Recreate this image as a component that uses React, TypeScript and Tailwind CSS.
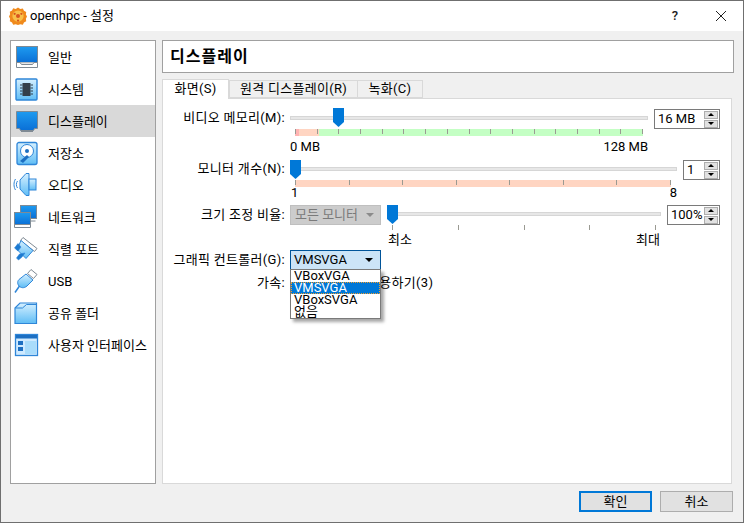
import React from "react";

const FONT = { fontFamily: 'Roboto, "Noto Sans CJK KR", sans-serif' };

function Defs() {
  return (
    <svg width="0" height="0" className="absolute">
      <defs>
        <linearGradient id="scr" x1="0" y1="0" x2="0" y2="1">
          <stop offset="0" stopColor="#1e9bf0" />
          <stop offset="1" stopColor="#0a6fd6" />
        </linearGradient>
        <linearGradient id="lite" x1="0" y1="0" x2="0" y2="1">
          <stop offset="0" stopColor="#d6f0ff" />
          <stop offset="1" stopColor="#5fbdf5" />
        </linearGradient>
      </defs>
    </svg>
  );
}

function Icon({ name }: { name: string }) {
  const common = { width: 26, height: 26, viewBox: "0 0 26 26", className: "shrink-0" };
  switch (name) {
    case "general":
      return (
        <svg {...common}>
          <rect x="3.500" y="2.500" width="21" height="16" fill="url(#scr)" stroke="#7f8a94" />
          <path d="M3.500 18.500h21v5h-21z" fill="#fff" stroke="#7f8a94" />
          <path d="M7 18.500l1.500 2h11l1.500-2" fill="#e6e6e6" stroke="#7f8a94" />
        </svg>
      );
    case "system":
      return (
        <svg {...common}>
          <rect x="3" y="3" width="21" height="21" rx="1" fill="url(#lite)" stroke="#2f86d8" strokeWidth="1.400" />
          <rect x="9.500" y="7" width="8" height="13" fill="#333f4a" />
          <path d="M7 9h2.500M7 12h2.500M7 15h2.500M7 18h2.500M17.500 9h2.500M17.500 12h2.500M17.500 15h2.500M17.500 18h2.500" stroke="#333f4a" />
        </svg>
      );
    case "display":
      return (
        <svg {...common}>
          <path d="M3.500 3.500h21v17h-3l-1 2h-13l-1-2h-3z" fill="url(#scr)" stroke="#7f8a94" />
          <path d="M8 23.500h12" stroke="#7f8a94" />
        </svg>
      );
    case "storage":
      return (
        <svg {...common}>
          <rect x="4" y="2.500" width="20" height="22" rx="2" fill="url(#lite)" stroke="#2f86d8" strokeWidth="1.300" />
          <circle cx="14" cy="11" r="6.500" fill="#fff" stroke="#2f86d8" />
          <circle cx="14" cy="11" r="2" fill="#1d6fc2" />
          <path d="M7 21l7-6 2 2-6 6z" fill="#1d6fc2" />
        </svg>
      );
    case "audio":
      return (
        <svg {...common}>
          <path d="M7 8L13 1.500h3v22h-3L7 17z" fill="url(#lite)" stroke="#2f86d8" />
          <rect x="16" y="7" width="7" height="11" fill="url(#lite)" stroke="#2f86d8" />
          <path d="M4.500 9c-1.500 2-1.500 5 0 7M2.500 7c-2 3-2 8 0 11" stroke="#2f86d8" fill="none" />
        </svg>
      );
    case "network":
      return (
        <svg {...common}>
          <rect x="7.500" y="1.500" width="16" height="13" fill="url(#scr)" stroke="#7f8a94" />
          <rect x="1.500" y="8.500" width="16" height="12" fill="url(#scr)" stroke="#7f8a94" />
          <path d="M1.500 20.500h16v3h-16z" fill="#fff" stroke="#7f8a94" />
          <path d="M17.500 17h5" stroke="#7f8a94" />
        </svg>
      );
    case "serial":
      return (
        <svg {...common}>
          <path d="M10 1.500l14 11-2.500 3-14-11z" fill="#fff" stroke="#7f8a94" />
          <path d="M8 4.500l12 10-7 8-9-9z" fill="url(#lite)" stroke="#2f86d8" />
          <path d="M5 7.500L1.500 12l3.500 3 3-4zM12 17l-3 4-3.500 3-2-2 3-4z" fill="#1d7ad0" stroke="#2f86d8" strokeWidth=".6" />
        </svg>
      );
    case "usb":
      return (
        <svg {...common}>
          <path d="M18 1.500l6 5-3.500 4-6-5z" fill="#fff" stroke="#7f8a94" />
          <path d="M13 6l7 6-6 6c-3 2.500-6 2-8 0-2-2.500-1.500-5 0-6.500z" fill="url(#lite)" stroke="#2f86d8" />
          <path d="M6.500 18L2 24.500" stroke="#2f86d8" strokeWidth="1.500" />
        </svg>
      );
    case "folder":
      return (
        <svg {...common}>
          <path d="M2 8l5-5h16.500v20.500H2z" fill="url(#lite)" stroke="#2f86d8" strokeWidth="1.200" />
          <path d="M2.500 8h7l4-3.500h9.500" fill="none" stroke="#2f86d8" />
        </svg>
      );
    default:
      return (
        <svg {...common}>
          <rect x="2.500" y="2.500" width="22" height="21" fill="#cfeaff" stroke="#2f86d8" strokeWidth="1.300" />
          <rect x="3" y="3" width="21" height="3.500" fill="#1d6fc2" />
          <rect x="5" y="9" width="5" height="4" fill="#1d6fc2" />
          <rect x="5" y="15" width="5" height="4" fill="#1d6fc2" />
          <rect x="12" y="9" width="11" height="13" fill="#a9dcfb" />
        </svg>
      );
  }
}

const MENU = [
  ["general", "일반"],
  ["system", "시스템"],
  ["display", "디스플레이"],
  ["storage", "저장소"],
  ["audio", "오디오"],
  ["network", "네트워크"],
  ["serial", "직렬 포트"],
  ["usb", "USB"],
  ["folder", "공유 폴더"],
  ["ui", "사용자 인터페이스"],
];

function Thumb({ left }: { left: number }) {
  return (
    <svg width="11" height="19" viewBox="0 0 11 19" className="absolute top-0" style={{ left }}>
      <path d="M0 0h11v14l-5.500 5L0 14z" fill="#0078d7" />
    </svg>
  );
}

function Track({ width, thumb, height = 19, trackTop = 7 }: { width: number; thumb: number; height?: number; trackTop?: number }) {
  return (
    <div className="relative" style={{ width, height }}>
      <div className="absolute left-0 right-0 h-[4px] bg-[#e7e7e7] border border-[#d6d6d6]" style={{ top: trackTop }} />
      <Thumb left={thumb} />
    </div>
  );
}

function Ticks({ count }: { count: number }) {
  return (
    <div className="absolute inset-0 flex justify-between">
      {Array.from({ length: count }).map((_, i) => (
        <div key={i} className="w-px h-[5px] bg-[#9a9a92]" />
      ))}
    </div>
  );
}

function Spin({ value, width }: { value: string; width: number }) {
  return (
    <div className="h-[20px] border border-[#7a7a7a] bg-white flex items-center pl-[3px] pr-px" style={{ width }}>
      <span className="flex-1 text-[13px] leading-[18px] text-black">{value}</span>
      <div className="flex flex-col gap-px w-[14px]">
        <div className="h-[8px] bg-[#e1e1e1] border border-[#adadad] flex items-center justify-center">
          <div className="w-0 h-0 border-x-[3px] border-x-transparent border-b-[3px] border-b-black" />
        </div>
        <div className="h-[8px] bg-[#e1e1e1] border border-[#adadad] flex items-center justify-center">
          <div className="w-0 h-0 border-x-[3px] border-x-transparent border-t-[3px] border-t-black" />
        </div>
      </div>
    </div>
  );
}

function Label({ children, lh = "leading-[20px]" }: { children: React.ReactNode; lh?: string }) {
  return <div className={`w-[123px] shrink-0 pr-[2px] text-right text-[13px] tracking-[0.3px] text-black whitespace-nowrap ${lh}`}>{children}</div>;
}

export default function App() {
  return (
    <div style={FONT} className="relative w-[744px] h-[523px] bg-[#f0f0f0] border-x border-b border-[#6f6f6f] flex flex-col overflow-hidden text-black">
      <Defs />
      <div className="h-[31px] bg-white border-t border-[#6f6f6f] flex items-center shrink-0 pl-[8px]">
        <svg width="18" height="18" viewBox="0 0 16 16" className="mr-[3px]">
          <path d="M8 .5l2 1.200 2.300-.3 1 2 2 1-.3 2.300L16 8.500l-1 2 .3 2.200-2 1-1 2-2.300-.3L8 16l-2-.600-2.300.3-1-2-2-1 .3-2.200L0 8.500l1-2-.3-2.300 2-1 1-2L6 1.700z" fill="#f08a1c" />
          <circle cx="8" cy="8" r="5" fill="#f8c04a" />
          <circle cx="8" cy="8" r="1.800" fill="#d9541e" />
          <circle cx="5" cy="6" r="1" fill="#d9541e" />
          <circle cx="11" cy="6" r="1" fill="#d9541e" />
          <circle cx="8" cy="12" r="1" fill="#d9541e" />
        </svg>
        <span className="text-[13px] leading-[20px] whitespace-nowrap">openhpc - 설정</span>
        <div className="flex-1" />
        <span className="text-[13px] font-medium mr-[37px] text-[#222]">?</span>
        <svg width="12" height="12" viewBox="0 0 12 12" className="mr-[16px]">
          <path d="M1 1l10 10M11 1L1 11" stroke="#222" strokeWidth="1" />
        </svg>
      </div>

      <div className="flex-1 flex gap-[6px] pl-[9px] pr-[9px] pt-[9px] min-h-0">
        <div className="w-[146px] h-[444px] bg-white border border-[#a0a0a0] shrink-0">
          {MENU.map(([k, t]) => (
            <div key={k} className={`h-[32px] flex items-center pl-[2px] ${k === "display" ? "bg-[#d9d9d9]" : ""}`}>
              <Icon name={k} />
              <span className="ml-[9px] mt-px text-[13px] leading-[20px] whitespace-nowrap">{t}</span>
            </div>
          ))}
        </div>

        <div className="flex-1 flex flex-col min-w-0">
          <div className="h-[33px] bg-white border border-[#a0a0a0] flex items-center pl-[7px] shrink-0">
            <span className="text-[16px] font-bold tracking-[1px] leading-[20px]">디스플레이</span>
          </div>

          <div className="flex items-end h-[26px] shrink-0 relative z-10 mr-[3px]">
            <div className="w-[67px] h-[20px] bg-white border border-b-0 border-[#d9d9d9] text-center text-[13px] tracking-[0.3px] leading-[18px]">화면(S)</div>
            <div className="w-[129px] h-[18px] mb-px bg-[#f0f0f0] border border-[#d9d9d9] text-center text-[13px] tracking-[0.3px] leading-[16px] whitespace-nowrap">원격 디스플레이(R)</div>
            <div className="w-[66px] h-[18px] mb-px -ml-px bg-[#f0f0f0] border border-[#d9d9d9] text-center text-[13px] tracking-[0.3px] leading-[16px]">녹화(C)</div>
          </div>

          <div className="h-[386px] -mt-px bg-white border border-[#d9d9d9] mr-[2px] pl-px pt-[9px] relative">
            {/* Video memory */}
            <div className="flex items-start">
              <Label>비디오 메모리(M):</Label>
              <div className="w-[358px] ml-[3px] shrink-0">
                <Track width={358} thumb={43} height={21} trackTop={8} />
                <div className="relative ml-[5px] w-[348px] h-[7px] flex">
                  <div className="w-[4px] bg-[#ffb3b3]" />
                  <div className="w-[20px] bg-[#ffd5c2]" />
                  <div className="flex-1 bg-[#c4ffc4]" />
                  <Ticks count={17} />
                </div>
                <div className="flex justify-between text-[13px] leading-[18px] mt-[2px]">
                  <span>0 MB</span>
                  <span>128 MB</span>
                </div>
              </div>
              <div className="ml-[6px] mt-px"><Spin value="16 MB" width={66} /></div>
            </div>

            {/* Monitor count */}
            <div className="flex items-start mt-[4px]">
              <Label lh="leading-[18px]">모니터 개수(N):</Label>
              <div className="w-[387px] ml-[3px] shrink-0">
                <Track width={387} thumb={0} height={20} />
                <div className="relative ml-[5px] w-[376px] h-[7px] bg-[#ffd5c2]">
                  <Ticks count={8} />
                </div>
                <div className="flex justify-between text-[13px] leading-[12px] pl-px">
                  <span>1</span>
                  <span>8</span>
                </div>
              </div>
              <div className="ml-[6px]"><Spin value="1" width={37} /></div>
            </div>

            {/* Scale */}
            <div className="flex items-start mt-[6px]">
              <Label>크기 조정 비율:</Label>
              <div className="ml-[3px] w-[91px] h-[20px] bg-[#cccccc] border border-[#bfbfbf] flex items-center pl-[4px] pr-[6px] shrink-0">
                <span className="flex-1 text-[13px] leading-[18px] text-[#7a7a7a] whitespace-nowrap">모든 모니터</span>
                <div className="w-0 h-0 border-x-[4px] border-x-transparent border-t-[4px] border-t-[#8a8a8a]" />
              </div>
              <div className="ml-[6px] w-[274px] shrink-0">
                <Track width={274} thumb={0} height={20} />
                <div className="relative ml-[5px] w-[264px] h-[6px]">
                  <Ticks count={5} />
                </div>
                <div className="flex justify-between text-[13px] leading-[16px] mt-px pl-px pr-px">
                  <span>최소</span>
                  <span>최대</span>
                </div>
              </div>
              <div className="ml-[6px]"><Spin value="100%" width={53} /></div>
            </div>

            {/* Graphics controller */}
            <div className="flex items-start mt-[2px]">
              <Label>그래픽 컨트롤러(G):</Label>
              <div className="ml-[3px] w-[91px] h-[20px] bg-[#cce4f7] border border-[#005499] flex items-center pl-[3px] pr-[7px] shrink-0">
                <span className="flex-1 text-[13px] leading-[18px]">VMSVGA</span>
                <div className="w-0 h-0 border-x-[4px] border-x-transparent border-t-[4px] border-t-black" />
              </div>
            </div>

            {/* Acceleration */}
            <div className="flex items-start mt-[3px]">
              <Label>가속:</Label>
              <span className="ml-[3px] text-[13px] leading-[20px] tracking-[0.3px] whitespace-nowrap pl-[29px]">3D 가속 사용하기(3)</span>
            </div>

            {/* Open list */}
            <div className="absolute left-[127px] top-[170px] w-[91px] h-[50px] bg-white border border-[#7a7a7a] shadow-[3px_3px_3px_rgba(0,0,0,0.35)] text-[13px] leading-[12px] z-20">
              <div className="h-[12px] pl-[3px]">VBoxVGA</div>
              <div className="h-[12px] pl-[2px] bg-[#0078d7] text-white border border-dotted border-[#f0a030] leading-[10px]">VMSVGA</div>
              <div className="h-[12px] pl-[3px]">VBoxSVGA</div>
              <div className="h-[12px] pl-[3px]">없음</div>
            </div>
          </div>
        </div>
      </div>

      <div className="h-[38px] shrink-0 flex justify-end items-start pt-[7px] pr-[10px] gap-[8px]">
        <button className="w-[73px] h-[21px] bg-[#e1e1e1] border-2 border-[#0078d7] text-[13px] leading-[17px]">확인</button>
        <button className="w-[73px] h-[21px] bg-[#e1e1e1] border border-[#adadad] text-[13px] leading-[19px]">취소</button>
      </div>
    </div>
  );
}
